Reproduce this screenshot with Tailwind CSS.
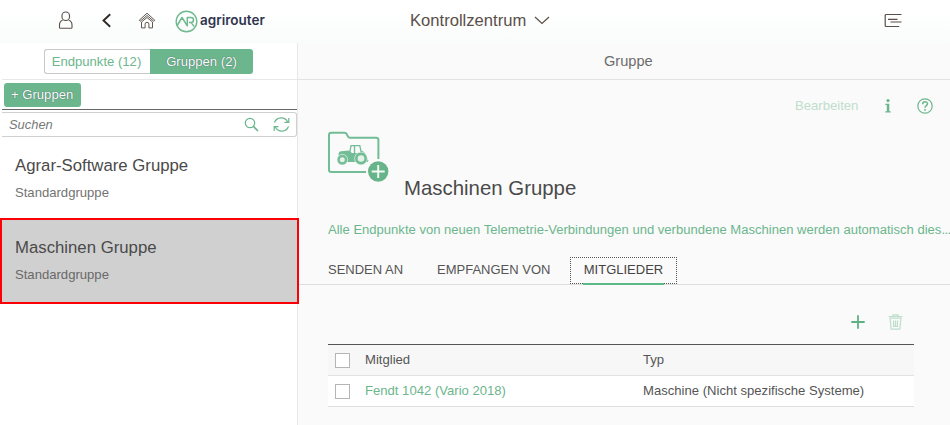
<!DOCTYPE html>
<html lang="de">
<head>
<meta charset="utf-8">
<title>agrirouter – Kontrollzentrum</title>
<script src="https://cdn.jsdelivr.net/npm/@tailwindcss/browser@4"></script>
</head>
<body class="w-[950px] h-[425px] overflow-hidden bg-white flex flex-col font-['Liberation_Sans',Arial,sans-serif] text-[13.1px] text-[#555] whitespace-nowrap">
<header class="h-[43px] shrink-0 flex items-start bg-linear-to-b from-white from-20% to-[#f9fcfb] text-[#5a4f49]">
  <svg class="mt-[11px] ml-[58px] w-[16px] h-[19px]" viewBox="0 0 16 19" fill="none" stroke="currentColor" stroke-width="1.1"><rect x="4" y="1" width="7.500" height="8.500" rx="3.600"/><path d="M4.700 9.300C2.500 10 1.500 11.500 1.500 14v2.500q0 .8.800.8h10.900q.8 0 .8-.8V14c0-2.500-1-4-3.200-4.700"/></svg>
  <svg class="mt-[13px] ml-[27px] w-[12px] h-[15px]" viewBox="0 0 12 15" fill="none" stroke="#2f2925" stroke-width="1.900"><path d="M9.200 1.200 2.500 7.500l6.700 6.300"/></svg>
  <svg class="mt-[12px] ml-[25px] w-[18px] h-[17px]" viewBox="0 0 18 17" fill="none" stroke="currentColor" stroke-width=".95" stroke-linejoin="round"><path d="M1.200 8.300 9 1.200l7.800 7.100-1 1L9 3.500 2.200 9.300z"/><path d="M3.500 10v5.900h3.600v-3.700q0-1.900 1.900-1.900t1.900 1.900v3.700h3.600V10L9 5.500z"/></svg>
  <div class="ml-[19px] mt-[10px] flex items-center">
    <svg class="w-[23px] h-[23px]" viewBox="0 0 23 23" fill="none" stroke="#6fb98f"><circle cx="11.500" cy="11.500" r="10.300" stroke-width="1.400"/><path d="M2.200 15.500 7 7.500l5.300 8.400V7.400h3.700a2.500 2.500 0 0 1 0 5H14M16 12.400l3 4" stroke-width="1.500" stroke-linejoin="round"/></svg>
    <span class="ml-[2px] mt-[-3px] font-[Inter,sans-serif] font-semibold text-[13.500px] leading-[20px] text-[#30344f]">agrirouter</span>
  </div>
  <div class="absolute left-[410px] top-[10px] flex">
    <span class="text-[16.600px] leading-[22px]">Kontrollzentrum</span>
    <svg class="ml-[8px] mt-[6px] w-[16px] h-[9px]" viewBox="0 0 16 9" fill="none" stroke="currentColor" stroke-width="1.200"><path d="m1 1 7 6.500L15 1"/></svg>
  </div>
  <svg class="ml-auto mr-[48px] mt-[13px] w-[18px] h-[15px]" viewBox="0 0 18 15" fill="none" stroke="currentColor" stroke-width="1.200"><path d="M17.500 1.500H2.200q-1 0-1 1v10q0 1 1 1h13M4 6.300h9.500M6.500 9h11"/></svg>
</header>
<div class="flex flex-1 min-h-0">
  <aside class="w-[298px] shrink-0 flex flex-col border-r border-[#e8e8e8]">
    <div class="h-[37px] shrink-0 ml-[2px] flex items-start pt-[6px] pl-[42px] border-b border-[#e8e8e8]">
      <div class="h-[25px] w-[106px] rounded-l-[3px] border border-r-0 border-[#c8c8c8] text-[#6cb68d] text-center text-[13.100px] leading-[24px] pr-[2px]">Endpunkte (12)</div>
      <div class="h-[25px] w-[103px] rounded-r-[3px] bg-[#6cb68d] text-white text-center text-[13.100px] leading-[25px] [text-shadow:0_0_1px_#345]">Gruppen (2)</div>
    </div>
    <div class="h-[30px] shrink-0 ml-[2px] pt-[3px] pl-[2px] border-b border-[#666]">
      <div class="w-[77px] h-[24px] rounded-[3px] bg-[#6cb68d] text-white text-[13.100px] leading-[24px] pl-[7px] [text-shadow:0_0_1px_#345]">+ Gruppen</div>
    </div>
    <div class="h-[25px] mt-[2px] shrink-0 ml-[2px] flex items-center border border-l-0 border-[#d0d0d0] rounded-r-[3px]">
      <span class="italic ml-[7px] mt-[1px] text-[12.900px] text-[#777]">Suchen</span>
      <svg class="ml-auto w-[15px] h-[15px]" viewBox="0 0 15 15" fill="none" stroke="#6cb68d" stroke-width="1.200"><circle cx="6" cy="6" r="4.700"/><path d="m9.400 9.400 4.600 4.600" stroke-width="1.700"/></svg>
      <svg class="ml-[14px] mr-[6px] w-[17px] h-[17px]" viewBox="0 0 17 17" fill="none" stroke="#6cb68d" stroke-width="1.200"><path d="M1.500 6.500a7.200 7.200 0 0 1 13.200-.5M15.800 2v4.300h-4.300M15.500 10.500a7.200 7.200 0 0 1-13.200.5M1.200 15v-4.300h4.300"/></svg>
    </div>
    <div class="h-[81px] shrink-0 pl-[15px] pt-[18px]">
      <div class="text-[16.750px] leading-[22px] text-[#4a4a4a]">Agrar-Software Gruppe</div>
      <div class="mt-[7px] leading-[18px] text-[#737373]">Standardgruppe</div>
    </div>
    <div class="relative z-10 h-[86px] w-[299px] shrink-0 border-[2px] border-[#fb0007] bg-[#d0d0d0] pl-[13px] pt-[17px]">
      <div class="text-[16.750px] leading-[22px] text-[#4a4a4a]">Maschinen Gruppe</div>
      <div class="mt-[7px] leading-[18px] text-[#696969]">Standardgruppe</div>
    </div>
  </aside>
  <main class="flex-1 min-w-0 bg-[#fafafa] flex flex-col">
    <div class="h-[37px] shrink-0 border-b border-[#e2e2e2] text-[14.600px] leading-[36px] text-[#6c6c6c] pl-[306px]">Gruppe</div>
    <div class="h-[51px] shrink-0 flex items-center pt-[1px] pl-[497px]">
      <span class="w-[63px] text-[#bfdecd]">Bearbeiten</span>
      <svg class="ml-[27px] w-[6px] h-[14px]" viewBox="0 0 6 14" fill="#6cb68d"><circle cx="3" cy="1.600" r="1.600"/><path d="M.3 4.800h4v7.400h1.400v1.300H.3v-1.300h1.500V6.100H.3z"/></svg>
      <svg class="ml-[26px] w-[16px] h-[16px]" viewBox="0 0 16 16" fill="none" stroke="#6cb68d" stroke-width="1.200"><circle cx="8" cy="8" r="7.200"/><path d="M5.600 6.300c0-3.500 4.900-3.200 4.900-.5C10.500 7.600 8 7.600 8 9.800M8 11v1.700" stroke-width="1.500"/></svg>
    </div>
    <div class="h-[83px] shrink-0 pl-[30px] flex">
      <svg class="w-[61px] h-[52px]" viewBox="0 0 61 52" fill="none">
        <path d="M38 41H3.200q-2.200 0-2.200-2.200V4q0-2.200 2.200-2.200h13.200q1.900 0 2.500 1.700l1 1.900q.6 1.300 2 1.300h26.300q2.200 0 2.200 2.200v19" stroke="#72bd95" stroke-width="2"/>
        <path d="M21.800 21.500 23 14.700h8.800l1.400 6.500M26.500 15v7" stroke="#72bd95" stroke-width="1.300"/>
        <path d="M10.500 24q0-3.500 2.500-3.800l8-.7 3 2.500h8l.8-2.500q5.200.5 6.200 9l1.500.5-.6 2H12z" fill="#72bd95"/>
        <circle cx="14.300" cy="28.700" r="5.300" fill="#72bd95" stroke="#fafafa" stroke-width=".6"/><circle cx="14.300" cy="28.700" r="2.500" fill="#e4f2ea"/>
        <circle cx="33" cy="27.500" r="6.400" fill="#72bd95" stroke="#fafafa" stroke-width=".6"/><circle cx="33" cy="27.500" r="3.300" fill="#e4f2ea"/>
        <circle cx="50.200" cy="40.500" r="10.200" fill="#68b48a"/><path d="M50.200 34v13M43.700 40.500h13" stroke="#f3faf6" stroke-width="1.900"/>
      </svg>
      <h1 class="ml-[15px] mt-[44px] text-[20.400px] leading-[26px] text-[#4a4a4a]">Maschinen Gruppe</h1>
    </div>
    <p class="h-[32px] shrink-0 pl-[30px] pt-[7px] leading-[18px] text-[13.060px] text-[#6cb68d]">Alle Endpunkte von neuen Telemetrie-Verbindungen und verbundene Maschinen werden automatisch dies<span class="tracking-[-0.6px]">...</span></p>
    <nav class="h-[39px] shrink-0 border-b border-[#dedede] pl-[30px] pt-[11px] flex text-[13px]">
      <span class="mt-[4px] w-[109px] leading-[18px]">SENDEN AN</span>
      <span class="mt-[4px] w-[133px] leading-[18px]">EMPFANGEN VON</span>
      <span class="relative w-[107px] h-[27px] border border-dotted border-[#555] text-center leading-[24px] text-[#444]">MITGLIEDER<span class="absolute left-[12px] top-[25px] w-[81px] h-[2px] bg-[#5cba86]"></span></span>
    </nav>
    <div class="h-[59px] shrink-0 flex items-center pt-[14px] pl-[553px]">
      <svg class="w-[14px] h-[14px]" viewBox="0 0 14 14" stroke="#5fb184" stroke-width="1.800"><path d="M7 .3v13.400M.3 7h13.400"/></svg>
      <svg class="ml-[23px] w-[15px] h-[16px]" viewBox="0 0 15 16" fill="none" stroke="#bcdecb" stroke-width="1.200"><path d="M.7 2.500h13.600M5 2V.8h5V2M2 4.200l1.200 11h8.600l1.200-11zM5.500 6.500V12M7.500 6.500V12M9.500 6.500V12M5 12.300h5"/></svg>
    </div>
    <div class="ml-[30px] w-[586px] border-t border-[#555]">
      <div class="h-[31px] flex items-center bg-[#f7f7f7] border-b border-[#e3e3e3]">
        <span class="ml-[7px] mt-[1px] size-[15px] border border-[#b5b5b5] bg-white"></span>
        <span class="ml-[15px] w-[278px]">Mitglied</span><span>Typ</span>
      </div>
      <div class="h-[31px] flex items-center bg-white border-b border-[#dedede]">
        <span class="ml-[7px] mt-[1px] size-[15px] border border-[#b5b5b5]"></span>
        <span class="ml-[15px] w-[278px] text-[#6cb68d]">Fendt 1042 (Vario 2018)</span><span>Maschine (Nicht spezifische Systeme)</span>
      </div>
    </div>
  </main>
</div>
</body>
</html>
